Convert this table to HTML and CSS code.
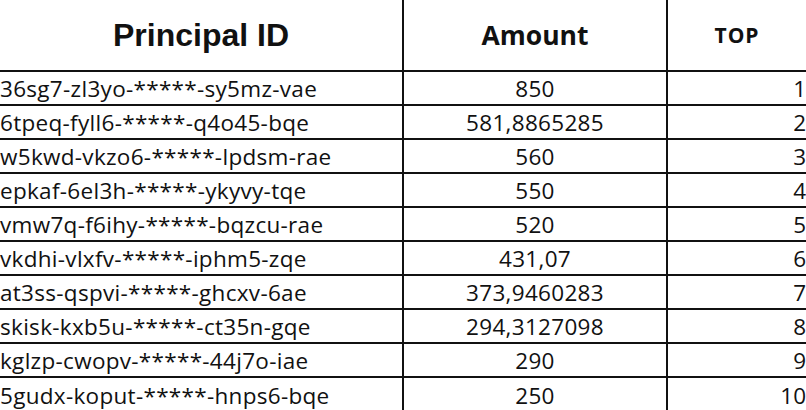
FILE: index.html
```html
<!DOCTYPE html>
<html>
<head>
<meta charset="utf-8">
<link rel="stylesheet" href="styles.css">
</head>
<body>
<table class="sheet">
  <colgroup>
    <col class="c-id">
    <col class="c-amt">
    <col class="c-top">
  </colgroup>
  <thead>
    <tr>
      <th class="h-id">Principal ID</th>
      <th class="h-amt">Amount</th>
      <th class="h-top">TOP</th>
    </tr>
  </thead>
  <tbody>
    <tr><td class="id">36sg7-zl3yo-*****-sy5mz-vae</td><td class="amt">850</td><td class="top">1</td></tr>
    <tr><td class="id">6tpeq-fyll6-*****-q4o45-bqe</td><td class="amt">581,8865285</td><td class="top">2</td></tr>
    <tr><td class="id">w5kwd-vkzo6-*****-lpdsm-rae</td><td class="amt">560</td><td class="top">3</td></tr>
    <tr><td class="id">epkaf-6el3h-*****-ykyvy-tqe</td><td class="amt">550</td><td class="top">4</td></tr>
    <tr><td class="id">vmw7q-f6ihy-*****-bqzcu-rae</td><td class="amt">520</td><td class="top">5</td></tr>
    <tr><td class="id">vkdhi-vlxfv-*****-iphm5-zqe</td><td class="amt">431,07</td><td class="top">6</td></tr>
    <tr><td class="id">at3ss-qspvi-*****-ghcxv-6ae</td><td class="amt">373,9460283</td><td class="top">7</td></tr>
    <tr><td class="id">skisk-kxb5u-*****-ct35n-gqe</td><td class="amt">294,3127098</td><td class="top">8</td></tr>
    <tr><td class="id">kglzp-cwopv-*****-44j7o-iae</td><td class="amt">290</td><td class="top">9</td></tr>
    <tr><td class="id">5gudx-koput-*****-hnps6-bqe</td><td class="amt">250</td><td class="top">10</td></tr>
  </tbody>
</table>
</body>
</html>
```

FILE: styles.css
```css
html, body {
  margin: 0;
  padding: 0;
  background: #ffffff;
}

.sheet {
  width: 806px;
  table-layout: fixed;
  border-collapse: separate;
  border-spacing: 0;
  color: #111111;
  font-family: "Open Sans", Lato, sans-serif;
}

.c-id { width: 404px; }
.c-amt { width: 264px; }
.c-top { width: 138px; }

.sheet th,
.sheet td {
  box-sizing: border-box;
  padding: 0;
  border-bottom: 2px solid #111111;
  vertical-align: middle;
  white-space: nowrap;
  overflow: hidden;
}

.sheet th:not(:last-child),
.sheet td:not(:last-child) {
  border-right: 2px solid #111111;
}

.sheet thead th {
  height: 72px;
  text-align: center;
}

.h-id {
  font-family: "Liberation Sans", Arial, sans-serif;
  font-weight: 700;
  font-size: 32px;
}

.h-amt {
  font-weight: 700;
  font-size: 26.5px;
  padding-top: 3px;
}

.h-top {
  font-weight: 700;
  font-size: 21px;
  letter-spacing: 1px;
  padding-top: 3px;
}

.sheet tbody td {
  height: 34px;
  font-size: 22.5px;
}

.sheet tbody tr:last-child td {
  border-bottom: none;
}

.id {
  text-align: left;
  padding-left: 5px;
  letter-spacing: 0.3px;
}

.amt {
  text-align: center;
  letter-spacing: 0.3px;
}

.top {
  text-align: right;
  padding-right: 3px;
}
```
